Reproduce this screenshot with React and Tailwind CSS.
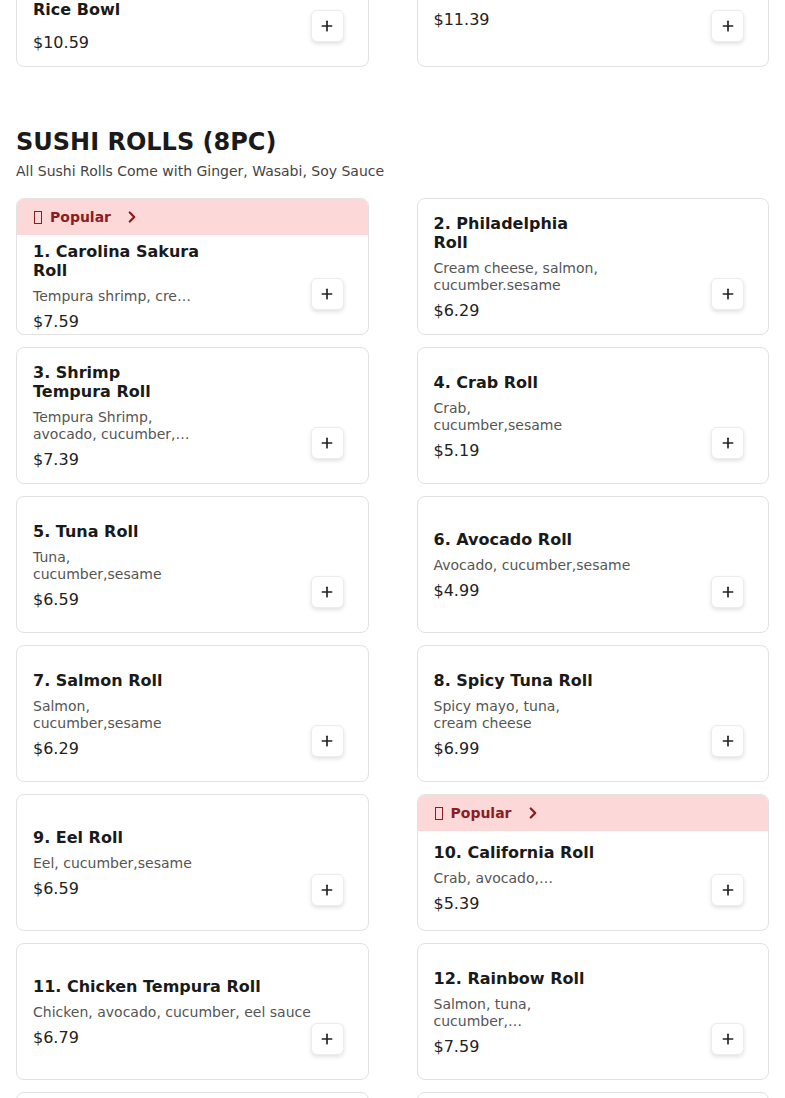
import { ChevronRight, Plus } from "lucide-react";

const previous = [
  { title: ["13. Chicken Teriyaki", "Rice Bowl"], desc: [], price: "$10.59", popular: true, pad: "pt-[18px] pb-4" },
  { title: ["14. Salmon Teriyaki Bowl"], desc: [], price: "$11.39", pad: "pt-7 pb-4" },
];

const rolls = [
  { title: ["1. Carolina Sakura", "Roll"], desc: ["Tempura shrimp, cre…"], price: "$7.59", popular: true },
  { title: ["2. Philadelphia", "Roll"], desc: ["Cream cheese, salmon,", "cucumber.sesame"], price: "$6.29" },
  { title: ["3. Shrimp", "Tempura Roll"], desc: ["Tempura Shrimp,", "avocado, cucumber,…"], price: "$7.39" },
  { title: ["4. Crab Roll"], desc: ["Crab,", "cucumber,sesame"], price: "$5.19" },
  { title: ["5. Tuna Roll"], desc: ["Tuna,", "cucumber,sesame"], price: "$6.59" },
  { title: ["6. Avocado Roll"], desc: ["Avocado, cucumber,sesame"], price: "$4.99" },
  { title: ["7. Salmon Roll"], desc: ["Salmon,", "cucumber,sesame"], price: "$6.29" },
  { title: ["8. Spicy Tuna Roll"], desc: ["Spicy mayo, tuna,", "cream cheese"], price: "$6.99" },
  { title: ["9. Eel Roll"], desc: ["Eel, cucumber,sesame"], price: "$6.59" },
  { title: ["10. California Roll"], desc: ["Crab, avocado,…"], price: "$5.39", popular: true, pad: "pt-[14px] pb-4" },
  { title: ["11. Chicken Tempura Roll"], desc: ["Chicken, avocado, cucumber, eel sauce"], price: "$6.79" },
  { title: ["12. Rainbow Roll"], desc: ["Salmon, tuna,", "cucumber,…"], price: "$7.59" },
  { title: ["13. Dragon Roll"], desc: ["Shrimp tempura, eel,", "avocado,…"], price: "$8.99" },
  { title: ["14. Spider Roll"], desc: ["Soft shell crab,", "cucumber,…"], price: "$8.59" },
];

function ItemCard({ item }) {
  const hasDesc = item.desc.length > 0;
  const pad = item.pad || (item.popular ? "pt-[22px] pb-4" : "pt-5 pb-4");
  return (
    <div className="flex h-[137px] flex-col overflow-hidden rounded-lg border border-[#e2e2e2] bg-white">
      {item.popular && (
        <div className="flex h-9 shrink-0 items-center gap-2 bg-[#fdd8d8] px-4 text-sm font-bold text-[#8a1e1e]">
          {/* missing-glyph box */}
          <span className="ml-px inline-block h-[13px] w-[8px] border border-current" />
          <span>Popular</span>
          <ChevronRight size={18} strokeWidth={3} className="ml-1" />
        </div>
      )}
      <div className="flex min-h-0 flex-1">
        <div className={`flex min-w-0 flex-1 flex-col justify-center pl-4 ${pad}`}>
          <h3 className="text-base leading-[19px] font-bold whitespace-nowrap text-[#1a1a1a]">
            {item.title.map((line, i) => (
              <div key={i}>{line}</div>
            ))}
          </h3>
          {hasDesc && (
            <p className="mt-2 text-sm leading-[17px] whitespace-nowrap text-[#555]">
              {item.desc.map((line, i) => (
                <span key={i} className="block">{line}</span>
              ))}
            </p>
          )}
          <div className={`${hasDesc ? "mt-[5px]" : "mt-3"} text-base leading-6 text-[#222]`}>
            {item.price}
          </div>
        </div>
        <div className="flex shrink-0 items-end pr-6 pb-6">
          <button className="flex h-8 w-[33px] items-center justify-center rounded-md border border-[#ececec] bg-white text-[#222] shadow-[0_2px_4px_rgba(0,0,0,0.12)]">
            <Plus size={16} strokeWidth={2.5} />
          </button>
        </div>
      </div>
    </div>
  );
}

export default function App() {
  return (
    <div className="min-h-screen overflow-hidden bg-white px-4 font-['DejaVu_Sans',sans-serif]">
      {/* End of previous section */}
      <div className="-mt-[70px] grid grid-cols-2 gap-x-12 gap-y-3">
        {previous.map((item, i) => (
          <ItemCard key={i} item={item} />
        ))}
      </div>

      {/* Sushi rolls */}
      <section className="mt-[59px]">
        <h2 className="text-2xl leading-8 font-bold text-[#1a1a1a]">SUSHI ROLLS (8PC)</h2>
        <p className="mt-[3px] text-sm leading-5 text-[#444]">
          All Sushi Rolls Come with Ginger, Wasabi, Soy Sauce
        </p>
        <div className="mt-[17px] grid grid-cols-2 gap-x-12 gap-y-3">
          {rolls.map((item, i) => (
            <ItemCard key={i} item={item} />
          ))}
        </div>
      </section>
    </div>
  );
}
